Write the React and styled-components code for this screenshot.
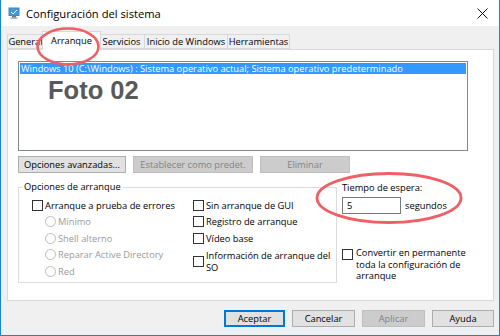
import React from 'react';
import styled, { createGlobalStyle } from 'styled-components';

const Global = createGlobalStyle`
  html, body { margin: 0; padding: 0; background: #fff; }
  body { font-family: "Open Sans", "Noto Sans", sans-serif; }
  * { box-sizing: border-box; }
`;

const Window = styled.div`
  width: 500px;
  height: 336px;
  display: flex;
  flex-direction: column;
  border: 1px solid #1883d7;
  border-top: none;
  background: #f0f0f0;
  overflow: hidden;
  font-size: 9.3px;
  color: #000;
`;

const TitleBar = styled.div`
  height: 26px;
  flex: none;
  background: #fff;
  display: flex;
  align-items: center;
  padding: 0 11px 0 7px;
  gap: 6px;
`;

const Title = styled.span`
  font-size: 11.2px;
  color: #000;
`;

const Close = styled.svg`
  margin-left: auto;
`;

const Body = styled.div`
  flex: 1;
  display: flex;
  flex-direction: column;
  padding: 0 5px 8px 6px;
`;

const TabRow = styled.div`
  height: 23px;
  display: flex;
  align-items: flex-end;
  position: relative;
  z-index: 2;
`;

const Tab = styled.div`
  position: relative;
  width: ${p => p.$w}px;
  height: ${p => (p.$active ? 19 : 15)}px;
  margin: ${p => (p.$active ? '0 -2px -1px -2px' : '0')};
  background: ${p => (p.$active ? '#fff' : '#f0f0f0')};
  border: 1px solid #d9d9d9;
  border-bottom: ${p => (p.$active ? 'none' : '1px solid #d9d9d9')};
  border-left: ${p => (p.$noLeft ? 'none' : '1px solid #d9d9d9')};
  display: flex;
  align-items: ${p => (p.$active ? 'flex-start' : 'center')};
  padding-top: ${p => (p.$active ? '2px' : '0')};
  justify-content: center;
  white-space: nowrap;
  z-index: ${p => (p.$active ? 3 : 1)};
`;

const RedEllipse = styled.svg`
  position: absolute;
  pointer-events: none;
  overflow: visible;
  z-index: 10;
`;

const Panel = styled.div`
  flex: 1;
  background: #fff;
  border: 1px solid #d9d9d9;
  padding: 11px 10px 0 10px;
  display: flex;
  flex-direction: column;
`;

const ListBox = styled.div`
  position: relative;
  width: 450px;
  height: 90px;
  border: 1px solid #828790;
  padding: 1px;
`;

const ListRow = styled.div`
  height: 11px;
  line-height: 11px;
  background: ${p => (p.$selected ? '#3399ff' : 'transparent')};
  color: ${p => (p.$selected ? '#fff' : '#000')};
  padding-left: 1px;
  white-space: nowrap;
`;

const Photo = styled.div`
  position: absolute;
  left: 29px;
  top: 14px;
  font-family: "Liberation Sans", Arial, sans-serif;
  font-weight: bold;
  font-size: 25.5px;
  line-height: 28px;
  color: #595959;
`;

const ButtonRow = styled.div`
  display: flex;
  gap: ${p => p.$gap || 7}px;
  margin-top: ${p => p.$mt || 0}px;
  justify-content: ${p => p.$end ? 'flex-end' : 'flex-start'};
`;

const Button = styled.div`
  width: ${p => p.$w}px;
  height: 17px;
  display: flex;
  align-items: center;
  justify-content: center;
  background: ${p => (p.$disabled ? '#cccccc' : '#e1e1e1')};
  border: 1px solid ${p => (p.$default ? '#0078d7' : p.$disabled ? '#bfbfbf' : '#adadad')};
  box-shadow: ${p => (p.$default ? 'inset 0 0 0 1px #0078d7' : 'none')};
  color: ${p => (p.$disabled ? '#838383' : '#000')};
  white-space: nowrap;
`;

const Lower = styled.div`
  display: flex;
  margin-top: 8px;
`;

const Group = styled.fieldset`
  flex: none;
  width: 319px;
  height: 102px;
  margin: 0;
  border: 1px solid #dcdcdc;
  padding: 4px 0 0 13px;
  display: grid;
  grid-template-columns: 161px 1fr;
  min-width: 0;
`;

const Legend = styled.legend`
  padding: 0 2px;
  margin-left: -10px;
  line-height: 12px;
`;

const Column = styled.div`
  display: flex;
  flex-direction: column;
`;

const OptionRow = styled.div`
  display: flex;
  align-items: center;
  height: ${p => p.$h || 16.5}px;
  padding-left: ${p => p.$indent || 0}px;
  margin-top: ${p => p.$mt || 0}px;
  gap: 2px;
  color: ${p => (p.$disabled ? '#9a9a9a' : '#000')};
  line-height: 11.5px;
  white-space: nowrap;
`;

const Check = styled.span`
  flex: none;
  width: 11px;
  height: 11px;
  border: 1px solid #333;
  background: #fff;
  margin-top: ${p => p.$mt || 0}px;
`;

const Radio = styled.span`
  flex: none;
  width: 11px;
  height: 11px;
  border: 1px solid #bcbcbc;
  border-radius: 50%;
  background: #fff;
`;

const Right = styled.div`
  margin-left: 5px;
  display: flex;
  flex-direction: column;
  white-space: nowrap;
`;

const Timeout = styled.div`
  position: relative;
  display: flex;
  flex-direction: column;
  gap: 3px;
`;

const InputRow = styled.div`
  display: flex;
  align-items: center;
  gap: 4px;
`;

const Input = styled.div`
  width: 59px;
  height: 17px;
  border: 1px solid #7a7a7a;
  background: #fff;
  padding-left: 4px;
  display: flex;
  align-items: center;
`;

const Convert = styled.div`
  display: flex;
  align-items: flex-start;
  gap: 3px;
  margin-top: 33px;
  line-height: 11.6px;
`;

const TitleIcon = () => (
  <svg width="12" height="12" viewBox="0 0 12 12">
    <rect x="0.5" y="0.5" width="11" height="8.5" fill="#5b7fa6" />
    <rect x="1.5" y="1.5" width="9" height="6.5" fill="#3a9ae8" />
    <path d="M3 5 L5 7 L9 3" stroke="#fff" strokeWidth="1" fill="none" />
    <rect x="4" y="9" width="4" height="1.5" fill="#6d7b88" />
    <rect x="2.5" y="10.5" width="7" height="1.2" fill="#8a98a5" />
  </svg>
);

export default function App() {
  return (
    <>
      <Global />
      <Window>
        <TitleBar>
          <TitleIcon />
          <Title>Configuración del sistema</Title>
          <Close width="11" height="11" viewBox="0 0 11 11">
            <path d="M0.5 0.5 L10.5 10.5 M10.5 0.5 L0.5 10.5" stroke="#111" strokeWidth="1" />
          </Close>
        </TitleBar>
        <Body>
          <TabRow>
            <Tab $w={37}>General</Tab>
            <Tab $w={59} $active>
              Arranque
              <RedEllipse style={{ left: -7, top: -5, width: 64, height: 39 }} viewBox="0 0 64 39">
                <ellipse cx="32" cy="19.5" rx="30.5" ry="18" fill="none" stroke="#ef5f66" strokeWidth="2.6" />
              </RedEllipse>
            </Tab>
            <Tab $w={46} $noLeft>Servicios</Tab>
            <Tab $w={83} $noLeft>Inicio de Windows</Tab>
            <Tab $w={62} $noLeft>Herramientas</Tab>
          </TabRow>
          <Panel>
            <ListBox>
              <ListRow $selected>
                Windows 10 (C:\Windows) : Sistema operativo actual; Sistema operativo predeterminado
              </ListRow>
              <Photo>Foto 02</Photo>
            </ListBox>
            <ButtonRow $mt={5} $gap={7}>
              <Button $w={108}>Opciones avanzadas...</Button>
              <Button $w={120} $disabled>Establecer como predet.</Button>
              <Button $w={90} $disabled>Eliminar</Button>
            </ButtonRow>
            <Lower>
              <Group>
                <Legend>Opciones de arranque</Legend>
                <Column>
                  <OptionRow><Check />Arranque a prueba de errores</OptionRow>
                  <OptionRow $indent={13} $disabled><Radio />Mínimo</OptionRow>
                  <OptionRow $indent={13} $disabled><Radio />Shell alterno</OptionRow>
                  <OptionRow $indent={13} $disabled><Radio />Reparar Active Directory</OptionRow>
                  <OptionRow $indent={13} $disabled><Radio />Red</OptionRow>
                </Column>
                <Column>
                  <OptionRow><Check />Sin arranque de GUI</OptionRow>
                  <OptionRow><Check />Registro de arranque</OptionRow>
                  <OptionRow><Check />Vídeo base</OptionRow>
                  <OptionRow $h={24} $mt={3}>
                    <Check />
                    <span>Información de arranque del<br />SO</span>
                  </OptionRow>
                </Column>
              </Group>
              <Right>
                <Timeout>
                  <span>Tiempo de espera:</span>
                  <InputRow>
                    <Input>5</Input>
                    <span>segundos</span>
                  </InputRow>
                  <RedEllipse style={{ left: -27, top: -9, width: 148, height: 52 }} viewBox="0 0 148 52">
                    <ellipse cx="74" cy="26" rx="72" ry="24.5" fill="none" stroke="#ef5f66" strokeWidth="2.8" />
                  </RedEllipse>
                </Timeout>
                <Convert>
                  <Check $mt={2} />
                  <span>Convertir en permanente<br />toda la configuración de<br />arranque</span>
                </Convert>
              </Right>
            </Lower>
          </Panel>
          <ButtonRow $mt={9} $gap={7} $end>
            <Button $w={61} $default>Aceptar</Button>
            <Button $w={63}>Cancelar</Button>
            <Button $w={63} $disabled>Aplicar</Button>
            <Button $w={62}>Ayuda</Button>
          </ButtonRow>
        </Body>
      </Window>
    </>
  );
}
